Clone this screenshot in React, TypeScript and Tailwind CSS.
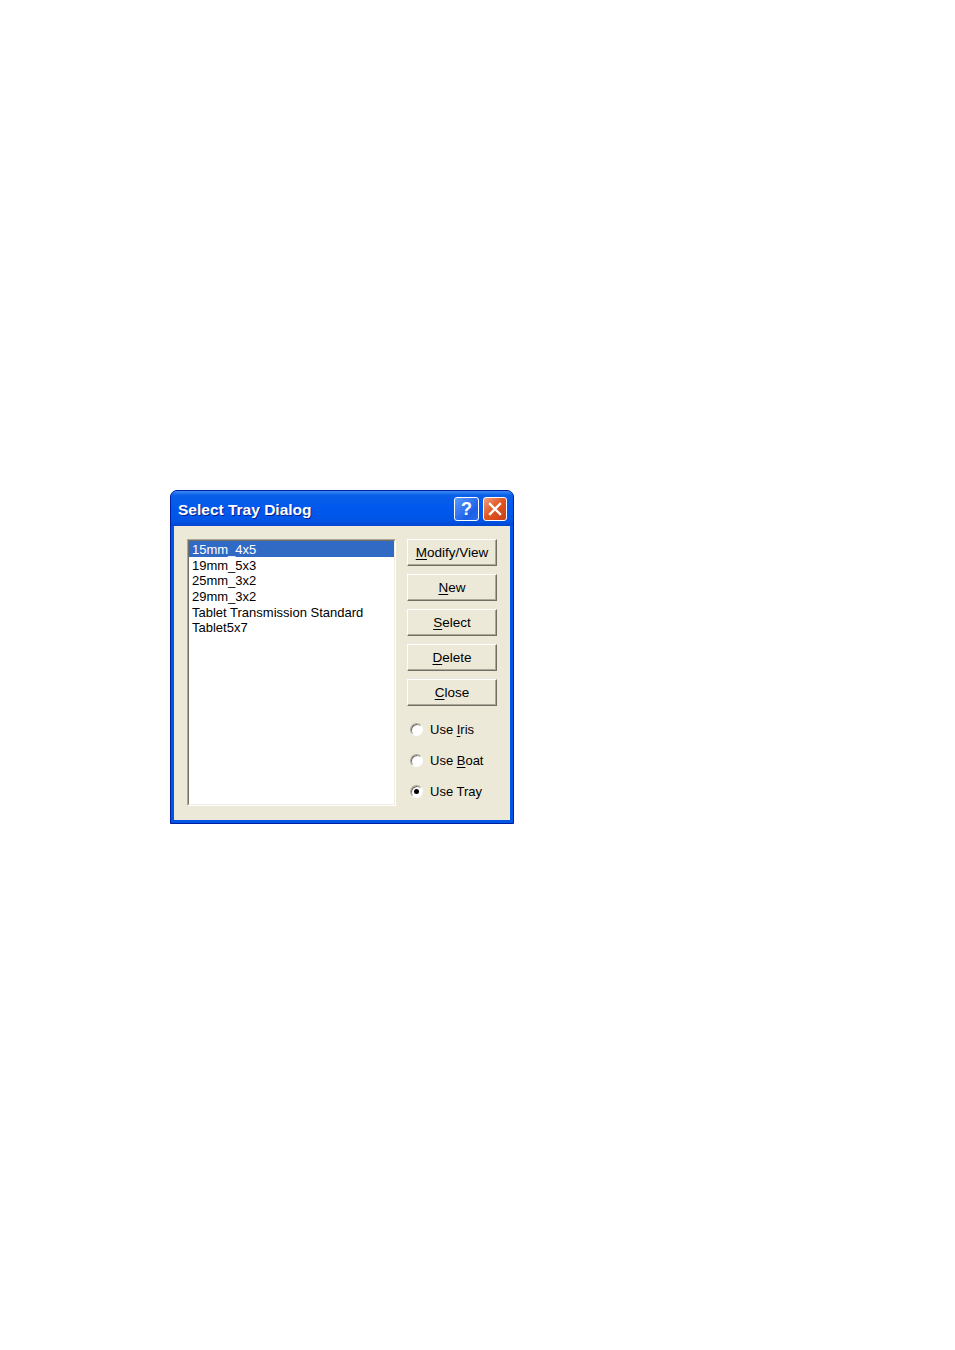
import React from "react";

const items = [
  "15mm_4x5",
  "19mm_5x3",
  "25mm_3x2",
  "29mm_3x2",
  "Tablet Transmission Standard",
  "Tablet5x7",
];

function Mn({ text, at }: { text: string; at: number }) {
  return (
    <>
      {text.slice(0, at)}
      <span className="underline underline-offset-2">{text[at]}</span>
      {text.slice(at + 1)}
    </>
  );
}

function XpButton({ text, at }: { text: string; at: number }) {
  return (
    <button className="h-[27px] w-[90px] border border-t-white border-l-white border-b-[#716f64] border-r-[#716f64] bg-[#ece9d8] shadow-[inset_-1px_-1px_0_#aca899] text-[13.5px] leading-none text-black">
      <Mn text={text} at={at} />
    </button>
  );
}

function Radio({ label, at, checked }: { label: string; at: number; checked?: boolean }) {
  return (
    <div className="flex h-[31px] items-center gap-[7px] pl-[3px]">
      <span className="flex h-[13px] w-[13px] items-center justify-center rounded-full border border-t-[#aca899] border-l-[#aca899] border-b-white border-r-white bg-white shadow-[inset_1px_1px_0_#716f64]">
        {checked && <span className="h-[5px] w-[5px] rounded-full bg-black" />}
      </span>
      <span className="text-[13px] leading-none text-black">
        {at >= 0 ? <Mn text={label} at={at} /> : label}
      </span>
    </div>
  );
}

export default function App() {
  return (
    <div className="min-h-[1350px] bg-white pl-[170px] pt-[490px] [font-family:'Liberation_Sans',Arial,sans-serif]">
      <div className="flex h-[334px] w-[344px] flex-col rounded-t-[7px] border border-[#001ea0] bg-[#0055e5]">
        {/* title bar */}
        <div className="flex h-[35px] items-center rounded-t-[6px] bg-[linear-gradient(#3c8cf5_0%,#0a5fe8_12%,#0058ee_50%,#0055e5_85%,#0046cf_100%)] pl-[7px] pr-[6px]">
          <span className="flex-1 pt-[2px] text-[15.5px] font-bold text-white [text-shadow:1px_1px_0_#0a1e8a]">
            Select Tray Dialog
          </span>
          <div className="flex gap-[4px]">
            <div className="flex h-[24px] w-[25px] items-center justify-center rounded-[3px] border border-white bg-[linear-gradient(135deg,#5b9bff,#1c5fe6_70%,#2a6cf0)] text-[18px] font-bold leading-none text-white">
              ?
            </div>
            <div className="flex h-[24px] w-[24px] items-center justify-center rounded-[3px] border border-white bg-[linear-gradient(135deg,#f0a080,#e0541f_50%,#c8401a)]">
              <svg width="14" height="14" viewBox="0 0 14 14">
                <path d="M2 2 L12 12 M12 2 L2 12" stroke="white" strokeWidth="2.4" strokeLinecap="square" />
              </svg>
            </div>
          </div>
        </div>
        {/* body */}
        <div className="mx-[3px] mb-[3px] flex flex-1 gap-[11px] bg-[#ece9d8] pl-[13px] pt-[13px]">
          <div className="h-[267px] w-[209px] border border-t-[#aca899] border-l-[#aca899] border-b-white border-r-white">
            <div className="h-full w-full border border-t-[#716f64] border-l-[#716f64] border-b-[#f1efe2] border-r-[#f1efe2] bg-white">
              {items.map((it, i) => (
                <div
                  key={it}
                  className={`h-[15.7px] pl-[3px] pt-[1px] text-[13px] leading-[15px] ${i === 0 ? "bg-[#316ac5] text-white" : "text-black"}`}
                >
                  {it}
                </div>
              ))}
            </div>
          </div>
          <div className="flex flex-col">
            <div className="flex flex-col gap-[8px]">
              <XpButton text="Modify/View" at={0} />
              <XpButton text="New" at={0} />
              <XpButton text="Select" at={0} />
              <XpButton text="Delete" at={0} />
              <XpButton text="Close" at={0} />
            </div>
            <div className="mt-[8px] flex flex-col">
              <Radio label="Use Iris" at={4} />
              <Radio label="Use Boat" at={4} />
              <Radio label="Use Tray" at={-1} checked />
            </div>
          </div>
        </div>
      </div>
    </div>
  );
}
